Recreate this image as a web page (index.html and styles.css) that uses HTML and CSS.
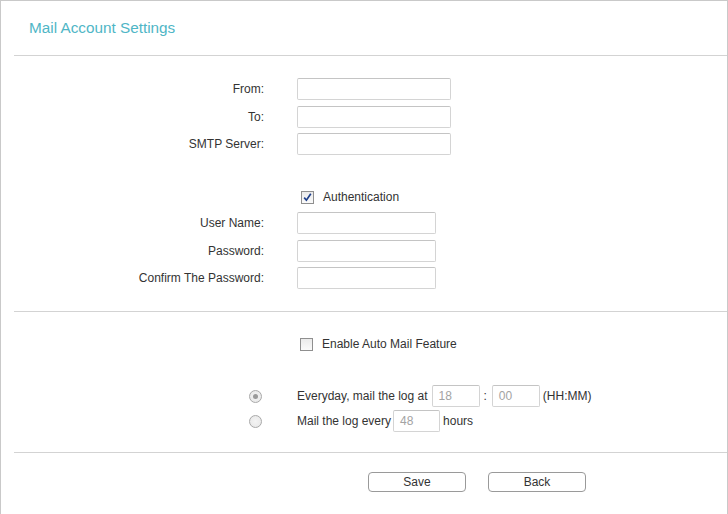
FILE: index.html
```html
<!DOCTYPE html>
<html>
<head>
<meta charset="utf-8">
<link rel="stylesheet" href="styles.css">
</head>
<body>
<div class="panel">
  <div class="title">Mail Account Settings</div>
  <div class="divider"></div>

  <div class="section s1">
    <div class="row r-from"><div class="label">From:</div><div class="field"><span class="input w-long"></span></div></div>
    <div class="row"><div class="label">To:</div><div class="field"><span class="input w-long"></span></div></div>
    <div class="row"><div class="label">SMTP Server:</div><div class="field"><span class="input w-long"></span></div></div>

    <div class="row check-row auth"><div class="label"></div><div class="field">
      <span class="checkbox checked"><svg width="11" height="11" viewBox="0 0 11 11"><path d="M2.2 5.6 L4.4 8.2 L8.8 1.8" fill="none" stroke="#1e3f8a" stroke-width="1.7"/></svg></span>
      <span class="check-text">Authentication</span>
    </div></div>

    <div class="row r-user"><div class="label">User Name:</div><div class="field"><span class="input w-mid"></span></div></div>
    <div class="row"><div class="label">Password:</div><div class="field"><span class="input w-mid"></span></div></div>
    <div class="row"><div class="label">Confirm The Password:</div><div class="field"><span class="input w-mid"></span></div></div>
  </div>
  <div class="divider"></div>

  <div class="section s2">
    <div class="row check-row enable"><div class="label"></div><div class="field">
      <span class="checkbox"></span>
      <span class="check-text">Enable Auto Mail Feature</span>
    </div></div>

    <div class="row radio-row first"><div class="label"><span class="radio on"></span></div><div class="field">
      <span class="text">Everyday, mail the log at</span>
      <span class="input small first-time">18</span>
      <span class="colon">:</span>
      <span class="input small">00</span>
      <span class="text unit">(HH:MM)</span>
    </div></div>
    <div class="row radio-row"><div class="label"><span class="radio"></span></div><div class="field">
      <span class="text">Mail the log every</span>
      <span class="input hours">48</span>
      <span class="text unit">hours</span>
    </div></div>
  </div>
  <div class="divider"></div>

  <div class="buttons">
    <button class="btn">Save</button>
    <button class="btn">Back</button>
  </div>
</div>
</body>
</html>
```

FILE: styles.css
```css
html, body {
  margin: 0;
  padding: 0;
  background: #fff;
}
body {
  font-family: "Liberation Sans", Arial, sans-serif;
  font-size: 12px;
  color: #333;
}
.panel {
  width: 728px;
  height: 514px;
  box-sizing: border-box;
  border: 1px solid #c9c9c9;
  border-bottom: none;
  overflow: hidden;
}
.title {
  padding: 17px 0 17px 28px;
  font-size: 15.3px;
  line-height: 20px;
  color: #4fb6c6;
}
.divider {
  height: 1px;
  margin-left: 13px;
  background: #d3d3d3;
}
.section {
  display: flex;
  flex-direction: column;
}
.s1 {
  padding-top: 22px;
  padding-bottom: 22px;
  gap: 5px;
}
.r-from { margin-bottom: 1px; }
.r-user { margin-bottom: 1px; }
.row {
  display: flex;
  align-items: center;
  height: 22px;
}
.label {
  width: 263px;
  flex: none;
  text-align: right;
  display: flex;
  justify-content: flex-end;
  align-items: center;
}
.field {
  margin-left: 33px;
  display: flex;
  align-items: center;
}
.input {
  display: inline-block;
  box-sizing: border-box;
  height: 22px;
  border: 1px solid #d4d4d4;
  border-top-color: #c4c4c4;
  border-radius: 2px;
  background: #fff;
  color: #a3a3a3;
  font-size: 12px;
  line-height: 20px;
  padding-left: 6px;
}
.w-long { width: 154px; }
.w-mid { width: 139px; }
.auth { margin-top: 28px; margin-bottom: 1px; height: 18px; }
.checkbox {
  box-sizing: border-box;
  width: 13px;
  height: 13px;
  border: 1px solid #8f8f8f;
  background: linear-gradient(#eaeaea, #fafafa);
  display: inline-flex;
  align-items: center;
  justify-content: center;
  margin-left: 4px;
}
.checkbox svg { display: block; }
.check-text { margin-left: 9px; }
.s2 {
  padding-top: 25px;
  padding-bottom: 20px;
}
.enable .checkbox { margin-left: 3px; }
.enable { height: 14px; }
.radio-row.first { margin-top: 34px; margin-bottom: 3px; }
.radio {
  box-sizing: border-box;
  width: 13px;
  height: 13px;
  border-radius: 50%;
  border: 1px solid #a9a9a9;
  background: radial-gradient(circle, #f4f4f4, #e6e6e6);
  margin-right: 2px;
  display: flex;
  align-items: center;
  justify-content: center;
}
.radio.on::after {
  content: "";
  width: 5px;
  height: 5px;
  border-radius: 50%;
  background: #9a9a9a;
}
.text { white-space: nowrap; }
.input.small { width: 48px; }
.input.first-time { margin-left: 4px; }
.colon { margin: 0 5px 0 4px; }
.input.hours { width: 47px; margin-left: 2px; }
.unit { margin-left: 3px; }
.buttons {
  display: flex;
  gap: 22px;
  padding: 19px 0 0 367px;
}
.btn {
  box-sizing: border-box;
  width: 98px;
  height: 20px;
  border: 1px solid #9a9a9a;
  border-radius: 4px;
  background: #fff;
  font-family: "Liberation Sans", Arial, sans-serif;
  font-size: 12px;
  color: #333;
  padding: 0;
  line-height: 18px;
}
```
